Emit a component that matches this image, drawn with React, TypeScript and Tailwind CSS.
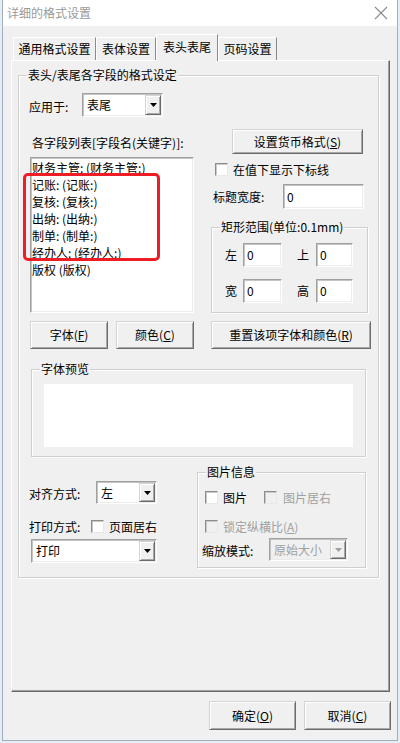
import React from "react";

const sunken =
  "border border-t-[#a0a0a0] border-l-[#a0a0a0] border-r-[#ffffff] border-b-[#ffffff] shadow-[inset_1px_1px_0_#c4c4c4,inset_-1px_-1px_0_#ececec]";
const raised =
  "border border-t-[#d4d4d4] border-l-[#d4d4d4] border-r-[#6c6c6c] border-b-[#6c6c6c] shadow-[inset_1px_1px_0_#ffffff,inset_-1px_-1px_0_#a8a8a8]";

function Group({ label, className, children }: { label: string; className: string; children?: React.ReactNode }) {
  return (
    <div className={`relative shrink-0 border border-[#cfcfcf] shadow-[inset_1px_1px_0_#ffffff,1px_1px_0_#ffffff] ${className}`}>
      <span className="absolute top-[-9px] left-[8px] px-[1px] bg-[#f0f0f0] leading-[16px] whitespace-nowrap">{label}</span>
      {children}
    </div>
  );
}

function Btn({ className, children }: { className: string; children: React.ReactNode }) {
  return (
    <div className={`flex items-center justify-center shrink-0 bg-[#f0f0f0] whitespace-nowrap ${raised} ${className}`}>
      {children}
    </div>
  );
}

function Input({ className, value }: { className: string; value: string }) {
  return (
    <div className={`bg-white shrink-0 flex items-center pl-[3px] ${sunken} ${className}`}>
      <span>{value}</span>
    </div>
  );
}

function Arrow({ color }: { color: string }) {
  return (
    <svg width="7" height="4" viewBox="0 0 7 4">
      <path d="M0 0H7L3.5 4Z" fill={color} />
    </svg>
  );
}

function Combo({ className, value, disabled }: { className: string; value: string; disabled?: boolean }) {
  return (
    <div className={`flex shrink-0 ${disabled ? "bg-[#f0f0f0]" : "bg-white"} ${sunken} ${className}`}>
      <div className={`flex-1 flex items-center pl-[4px] ${disabled ? "text-[#a0a0a0]" : ""}`}>{value}</div>
      <div className={`w-[16px] my-[1px] mr-[1px] flex items-center justify-center bg-[#f0f0f0] ${raised}`}>
        <Arrow color={disabled ? "#a0a0a0" : "#000000"} />
      </div>
    </div>
  );
}

function Check({ disabled }: { disabled?: boolean }) {
  return (
    <div
      className={`w-[13px] h-[13px] shrink-0 border border-t-[#8c8c8c] border-l-[#8c8c8c] border-r-[#e8e8e8] border-b-[#e8e8e8] shadow-[inset_1px_1px_0_#c8c8c8] ${
        disabled ? "bg-[#f0f0f0]" : "bg-white"
      }`}
    />
  );
}

function Tab({ label, className, selected }: { label: string; className: string; selected?: boolean }) {
  return (
    <div
      className={`flex items-center justify-center shrink-0 bg-[#f0f0f0] border-t border-l border-r border-t-white border-l-white border-r-[#8a8a8a] ${
        selected ? "h-[27px] mb-[-1px] relative z-10 pb-[2px]" : "h-[23px]"
      } ${className}`}
    >
      {label}
    </div>
  );
}

const items = ["财务主管: (财务主管:)", "记账: (记账:)", "复核: (复核:)", "出纳: (出纳:)", "制单: (制单:)", "经办人: (经办人:)", "版权 (版权)"];

export default function App() {
  return (
    <div className="w-[400px] h-[743px] bg-[#e4ecf5] pl-[2px] font-['Noto_Sans_CJK_SC','Microsoft_YaHei',sans-serif] text-[12px] leading-[16px] text-black">
      <div className="w-[396px] h-[741px] border-l border-r border-b border-[#a3aebb] bg-[#f0f0f0] flex flex-col">
        {/* Title bar */}
        <div className="h-[26px] shrink-0 bg-white flex items-center justify-between pl-[4px] pr-[9px]">
          <span className="text-[#9a9a9a]">详细的格式设置</span>
          <svg width="14" height="14" viewBox="0 0 14 14">
            <path d="M1 1L13 13M13 1L1 13" stroke="#8a8a8a" strokeWidth="1.1" />
          </svg>
        </div>

        {/* Tabs */}
        <div className="h-[34px] shrink-0 pt-[8px] pl-[10px] flex items-end">
          <Tab label="通用格式设置" className="w-[83px]" />
          <Tab label="表体设置" className="w-[60px]" />
          <Tab label="表头表尾" className="w-[62px]" selected />
          <Tab label="页码设置" className="w-[59px]" />
        </div>

        {/* Panel */}
        <div className="ml-[8px] w-[379px] h-[632px] shrink-0 border border-t-white border-l-white border-r-[#696969] border-b-[#696969] shadow-[inset_-1px_-1px_0_#a0a0a0] flex flex-col">
          <Group label="表头/表尾各字段的格式设定" className="ml-[6px] mt-[14px] w-[361px] h-[503px] flex flex-col">
            {/* 应用于 */}
            <div className="mt-[17px] ml-[10px] flex items-center h-[24px]">
              <span className="w-[53px] pt-[3px]">应用于:</span>
              <Combo className="w-[81px] h-[24px]" value="表尾" />
            </div>

            {/* two columns */}
            <div className="mt-[12px] ml-[11px] flex">
              <div className="w-[164px] flex flex-col">
                <div className="mt-[6px] ml-[2px] whitespace-nowrap">各字段列表[字段名(关键字)]:</div>
                <div className={`mt-[6px] w-[164px] h-[156px] bg-white flex flex-col pt-[1px] pl-[1px] ${sunken}`}>
                  {items.map((t) => (
                    <div key={t} className="h-[17px] flex items-center whitespace-nowrap">
                      {t}
                    </div>
                  ))}
                </div>
              </div>

              <div className="ml-[16px] w-[160px] flex flex-col">
                <Btn className="ml-[22px] w-[131px] h-[25px]">
                  <span>
                    设置货币格式(<u>S</u>)
                  </span>
                </Btn>
                <div className="mt-[9px] ml-[5px] flex items-center h-[13px]">
                  <Check />
                  <span className="ml-[5px] whitespace-nowrap">在值下显示下标线</span>
                </div>
                <div className="mt-[8px] ml-[3px] flex items-center h-[25px]">
                  <span className="w-[70px]">标题宽度:</span>
                  <Input className="w-[81px] h-[25px]" value="0" />
                </div>
                <Group label="矩形范围(单位:0.1mm)" className="mt-[18px] ml-[1px] w-[157px] h-[86px] flex flex-col">
                  <div className="mt-[15px] ml-[13px] flex items-center h-[24px]">
                    <span className="w-[18px]">左</span>
                    <Input className="w-[39px] h-[24px]" value="0" />
                    <span className="ml-[15px] w-[19px]">上</span>
                    <Input className="w-[37px] h-[24px]" value="0" />
                  </div>
                  <div className="mt-[12px] ml-[13px] flex items-center h-[24px]">
                    <span className="w-[18px]">宽</span>
                    <Input className="w-[39px] h-[24px]" value="0" />
                    <span className="ml-[15px] w-[19px]">高</span>
                    <Input className="w-[37px] h-[24px]" value="0" />
                  </div>
                </Group>
              </div>
            </div>

            {/* buttons row */}
            <div className="mt-[8px] ml-[11px] flex">
              <Btn className="w-[78px] h-[28px]">
                <span>
                  字体(<u>F</u>)
                </span>
              </Btn>
              <Btn className="ml-[8px] w-[78px] h-[28px]">
                <span>
                  颜色(<u>C</u>)
                </span>
              </Btn>
              <Btn className="ml-[17px] w-[160px] h-[28px]">
                <span>
                  重置该项字体和颜色(<u>R</u>)
                </span>
              </Btn>
            </div>

            {/* preview */}
            <Group label="字体预览" className="mt-[20px] ml-[12px] w-[335px] h-[88px] flex flex-col">
              <div className="mt-[14px] ml-[12px] w-[309px] h-[63px] bg-white" />
            </Group>

            {/* bottom area */}
            <div className="mt-[15px] ml-[10px] flex">
              <div className="w-[128px] flex flex-col">
                <div className="mt-[9px] flex items-center h-[23px]">
                  <span className="w-[67px] pt-[2px]">对齐方式:</span>
                  <Combo className="w-[61px] h-[23px]" value="左" />
                </div>
                <div className="mt-[16px] flex items-center h-[13px]">
                  <span className="w-[66px]">打印方式:</span>
                  <Check />
                  <span className="ml-[5px] whitespace-nowrap">页面居右</span>
                </div>
                <Combo className="mt-[6px] ml-[2px] w-[126px] h-[24px]" value="打印" />
              </div>

              <Group label="图片信息" className="ml-[40px] w-[169px] h-[96px] flex flex-col">
                <div className="mt-[18px] ml-[7px] flex items-center h-[13px]">
                  <Check />
                  <span className="ml-[5px]">图片</span>
                  <div className="ml-[17px]">
                    <Check disabled />
                  </div>
                  <span className="ml-[6px] text-[#a0a0a0] whitespace-nowrap">图片居右</span>
                </div>
                <div className="mt-[16px] ml-[7px] flex items-center h-[13px]">
                  <Check disabled />
                  <span className="ml-[5px] text-[#a0a0a0] whitespace-nowrap">
                    锁定纵横比(<u>A</u>)
                  </span>
                </div>
                <div className="mt-[5px] ml-[4px] flex items-center h-[23px]">
                  <span className="w-[67px] pt-[2px]">缩放模式:</span>
                  <Combo className="w-[79px] h-[23px]" value="原始大小" disabled />
                </div>
              </Group>
            </div>

            {/* annotation */}
            <div className="absolute left-[4px] top-[97px] w-[137px] h-[88px] border-[3px] border-[#ee1c25] rounded-[5px]" />
          </Group>
        </div>

        {/* dialog buttons */}
        <div className="mt-[9px] mr-[6px] flex justify-end gap-[8px]">
          <Btn className="w-[87px] h-[29px]">
            <span>
              确定(<u>O</u>)
            </span>
          </Btn>
          <Btn className="w-[87px] h-[29px]">
            <span>
              取消(<u>C</u>)
            </span>
          </Btn>
        </div>
      </div>
    </div>
  );
}
